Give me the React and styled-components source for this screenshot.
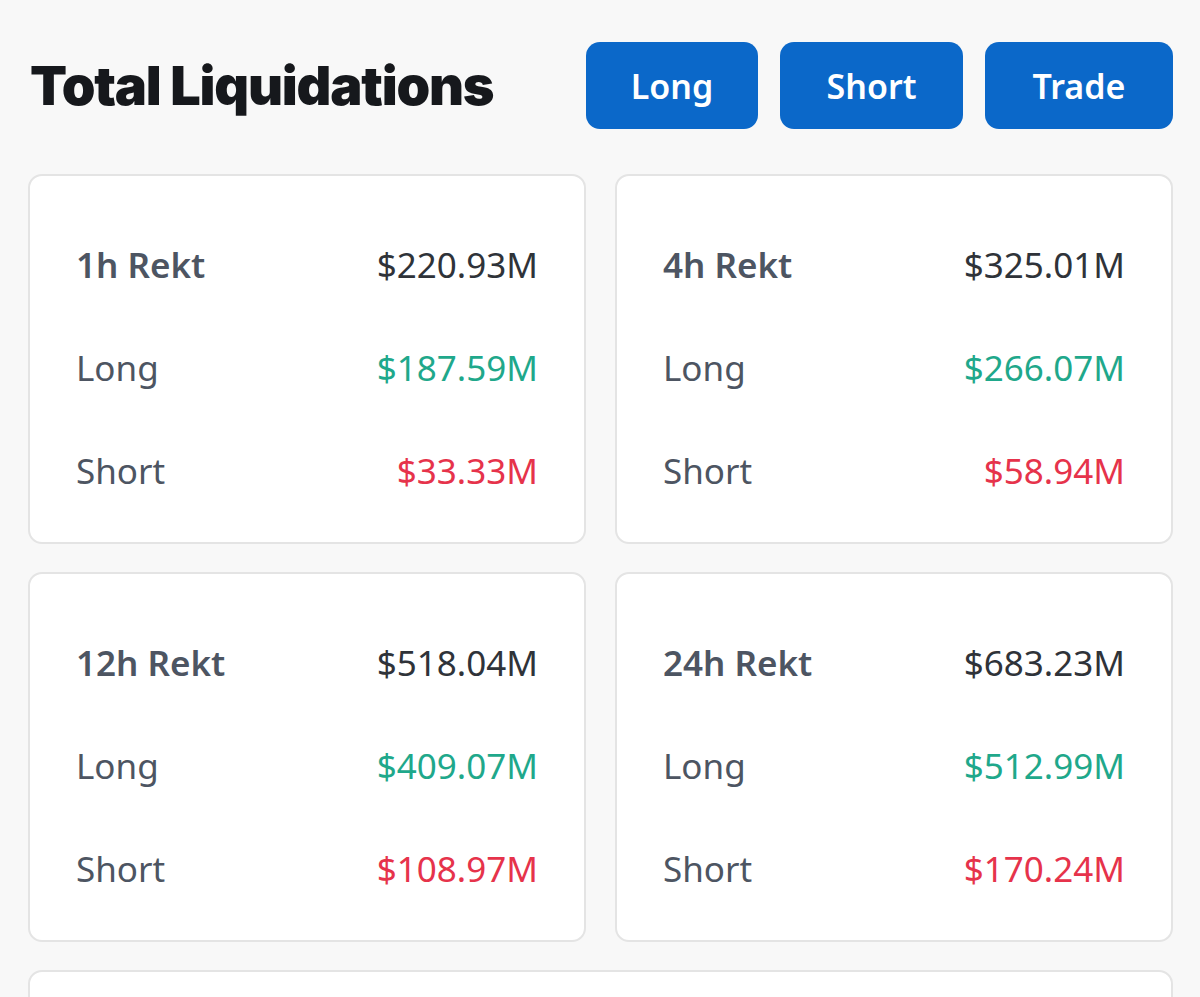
import React from "react";
import styled, { createGlobalStyle } from "styled-components";

const GlobalStyle = createGlobalStyle`
  body {
    margin: 0;
    background: #f8f8f8;
    font-family: "Noto Sans", "Open Sans", sans-serif;
  }
`;

const Page = styled.div`
  padding: 42px 27px 0 28px;
  height: 997px;
  box-sizing: border-box;
  overflow: hidden;
`;

const Header = styled.div`
  display: flex;
  align-items: center;
  justify-content: space-between;
  height: 87px;
  margin-bottom: 45px;
`;

const Title = styled.h1`
  margin: 0 0 0 2px;
  font-family: Inter, "Liberation Sans", sans-serif;
  font-weight: 900;
  font-size: 54px;
  letter-spacing: -1.2px;
  color: #16181c;
`;

const Buttons = styled.div`
  display: flex;
  gap: 22px;
`;

const Button = styled.button`
  width: ${(props) => props.w}px;
  height: 87px;
  border: none;
  border-radius: 14px;
  background: #0b68c9;
  color: #fff;
  font-family: "Noto Sans", sans-serif;
  font-weight: 600;
  font-size: 34px;
  cursor: pointer;
`;

const Grid = styled.div`
  display: grid;
  grid-template-columns: 1fr 1fr;
  column-gap: 29px;
  row-gap: 28px;
`;

const Card = styled.div`
  background: #fff;
  border: 2px solid #e4e4e4;
  border-radius: 14px;
  height: ${(props) => (props.tall ? "370px" : "auto")};
  box-sizing: border-box;
  padding: ${(props) => (props.tall ? "37px 46px 18px" : "0")};
`;

const WideCard = styled(Card)`
  grid-column: 1 / span 2;
  height: 120px;
`;

const Row = styled.div`
  display: flex;
  align-items: center;
  justify-content: space-between;
  height: 103px;
  font-size: 35px;
`;

const Label = styled.span`
  color: #4d5562;
  font-weight: ${(props) => (props.head ? 600 : 400)};
`;

const Value = styled.span`
  color: ${(props) =>
    props.tone === "up" ? "#1fa88b" : props.tone === "down" ? "#e6334b" : "#2f3339"};
`;

const data = [
  { period: "1h", total: "$220.93M", long: "$187.59M", short: "$33.33M" },
  { period: "4h", total: "$325.01M", long: "$266.07M", short: "$58.94M" },
  { period: "12h", total: "$518.04M", long: "$409.07M", short: "$108.97M" },
  { period: "24h", total: "$683.23M", long: "$512.99M", short: "$170.24M" },
];

const App = () => {
  return (
    <Page>
      <GlobalStyle />
      <Header>
        <Title>Total Liquidations</Title>
        <Buttons>
          <Button w={172}>Long</Button>
          <Button w={183}>Short</Button>
          <Button w={188}>Trade</Button>
        </Buttons>
      </Header>
      <Grid>
        {data.map((d) => (
          <Card tall key={d.period}>
            <Row>
              <Label head>{d.period} Rekt</Label>
              <Value>{d.total}</Value>
            </Row>
            <Row>
              <Label>Long</Label>
              <Value tone="up">{d.long}</Value>
            </Row>
            <Row>
              <Label>Short</Label>
              <Value tone="down">{d.short}</Value>
            </Row>
          </Card>
        ))}
        <WideCard />
      </Grid>
    </Page>
  );
};

export default App;
